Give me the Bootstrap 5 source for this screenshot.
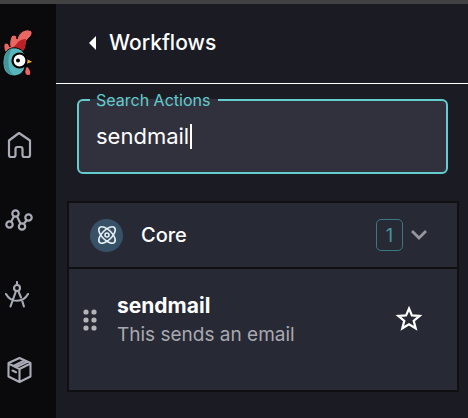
<!DOCTYPE html>
<html lang="en">
<head>
<meta charset="utf-8">
<meta name="viewport" content="width=device-width, initial-scale=1">
<title>Workflows</title>
<link rel="stylesheet" href="https://cdn.jsdelivr.net/npm/bootstrap@5.3.0/dist/css/bootstrap.min.css">
<style>
body { background: #1b1b24; color: #fff; font-family: Inter, "Liberation Sans", sans-serif; border-top: 4px solid #424242; }
.app-shell { min-height: calc(100vh - 4px); }
.side-nav { width: 56px; background: #0a0a0c; }
.side-nav a { width: 38px; height: 75px; color: #a9abb6; }
.side-nav a.brand-link { height: 103px; }
.page-head { height: 80px; border-bottom: 1px solid #fff; padding: 0 28px; }
.page-head a { gap: 11px; font-size: 21px; line-height: 28px; font-weight: 500; margin-top: -2px; }
.search-wrap { padding: 7px 20px 0 21px; }
.search-box { height: 83px; border: 2px solid #63cccd; border-radius: 6px; background: #31313d; padding: 0 17px; }
.search-box legend { float: none; width: auto; margin: 0 0 0 -6px; padding: 0 8px 0 6px; font-size: 16px; line-height: 18px; color: #63cccd; }
.search-box input { width: 100%; height: 40px; margin-top: 7px; padding: 0; font-size: 22px; line-height: 40px; color: #fff; background: transparent; border: 0; outline: 0; caret-color: transparent; }
.text-caret { left: 94px; top: 15px; width: 2px; height: 25px; background: #fff; }
.action-panel { margin: 27px 9px 0 11px; border: 2px solid #101013; background: #272935; }
.group-head { height: 66px; padding: 0 30px 0 21px; border-bottom: 2px solid #101013 !important; color: #fff; }
.group-icon { width: 33px; height: 33px; background: #375266; }
.group-name { margin-left: 18px; font-size: 20px; line-height: 28px; font-weight: 500; }
.group-count { width: 27px; height: 32px; border: 1px solid #3a7984; border-radius: 5px; color: #4a959f; font-size: 18px; }
.action-row { height: 121px; padding: 23px 34px 0 14px; }
.action-title { font-size: 21px; line-height: 28px; font-weight: 700; }
.action-text { font-size: 19px; line-height: 30px; color: #a9aaaf; }
.action-body { margin-left: 19px; }
</style>
<script src="https://cdn.jsdelivr.net/npm/bootstrap@5.3.0/dist/js/bootstrap.bundle.min.js"></script>
</head>
<body>
<div class="app-shell d-flex">
  <nav class="side-nav flex-shrink-0 d-flex flex-column" aria-label="Main">
    <a class="brand-link d-flex align-items-center justify-content-center" href="#" aria-label="Start">
      <svg width="38" height="56" viewBox="0 0 38 56">
        <g stroke="#000" stroke-width="1" stroke-linejoin="round">
          <path d="M5 24C3 18 4 15 6 15c2 0 3 2 4 4-1-7 1-12 4-12 2 0 3 2 3 4C19 4 25 1 29 2c5 1 3 6 0 8-2 2-3 3-3 6 0 4-2 7-5 8Z" fill="#e96762"/>
          <path d="M10 21c3-1 6-4 8-7 2-2 5-3 8-3-1 4 0 9-3 12l-7-1Z" fill="#bd2128" stroke="none"/>
          <path d="M12 20C6 21 2.500 28 3 36c.5 8 5 12 12 12 6-1 10-5 10-11V27c-2-5-7-8-13-7Z" fill="#58b5b9"/>
          <path d="M10 21C5 24 3.500 30 4 36c.5 7 4 11 9 11C7 41 7 29 12 20Z" fill="#43949b" stroke="none"/>
          <path d="M26 39c2-1 3 1 4.500 4 1 3 0 4.500-2.500 4.500-3.500 0-4-4-2-8.500Z" fill="#e96762"/>
          <path d="M26 30l7.500 4-7.500 2.500Z" fill="#efa92f"/>
          <circle cx="19.500" cy="32.500" r="7" fill="#fff" stroke-width="2.200"/>
        </g>
        <circle cx="18" cy="32.500" r="2" fill="#000"/>
      </svg>
    </a>
    <a class="d-flex align-items-center justify-content-center" href="#" aria-label="Home">
      <svg width="28" height="28" viewBox="0 0 28 28" fill="none" stroke="currentColor" stroke-width="2.200" stroke-linejoin="round"><path d="M14 2 4 9.500V24q0 2 2 2h2.500q2 0 2-2v-6q0-2 2-2h3q2 0 2 2v6q0 2 2 2H23q2 0 2-2V9.500Z"/></svg>
    </a>
    <a class="d-flex align-items-center justify-content-center" href="#" aria-label="Workflows">
      <svg width="30" height="28" viewBox="0 0 30 28" fill="none" stroke="currentColor" stroke-width="2.200"><circle cx="5.500" cy="18.500" r="3.200"/><circle cx="11.500" cy="7.500" r="3.200"/><circle cx="18" cy="20.500" r="3.200"/><circle cx="24.500" cy="11.500" r="3.200"/><path d="m7.300 15.500 2.500-5m3.300 0 3.300 7m3.600 0 2.500-3"/></svg>
    </a>
    <a class="d-flex align-items-center justify-content-center" href="#" aria-label="Design">
      <svg width="30" height="28" viewBox="0 0 30 28" fill="none" stroke="currentColor" stroke-width="2.100" stroke-linecap="round"><path d="M13 1v3M12 10 6.500 25.500M14.300 10 17 16.500m1.400 4 1.500 5M2 13c5 9 17 9 22 0"/><circle cx="13" cy="7" r="3"/></svg>
    </a>
    <a class="d-flex align-items-center justify-content-center" href="#" aria-label="Packages">
      <svg width="28" height="28" viewBox="0 0 28 28" fill="none" stroke="currentColor" stroke-width="2.100" stroke-linejoin="round" stroke-linecap="round"><path d="m14.500 2 11 5v13.500l-11 5.500-11-5.500V7ZM3.500 7.500l11 5.500 11-5.500M14.500 13v13M8.500 10 19.500 4.500M11 11.300 22 6M7.500 14.500l3.500 1.700"/></svg>
    </a>
  </nav>
  <main class="flex-grow-1">
    <header class="page-head d-flex align-items-center">
      <a class="d-flex align-items-center text-white text-decoration-none" href="#">
        <svg width="14" height="16" viewBox="0 0 14 16"><path d="M5 8l7-7v14Z" fill="currentColor"/></svg>
        Workflows
      </a>
    </header>
    <form class="search-wrap">
      <fieldset class="search-box">
        <legend><label for="search">Search Actions</label></legend>
        <div class="position-relative">
          <input id="search" type="text" value="sendmail" autocomplete="off">
          <span class="text-caret position-absolute"></span>
        </div>
      </fieldset>
    </form>
    <section class="action-panel">
      <button class="group-head w-100 border-0 bg-transparent d-flex align-items-center" type="button" aria-expanded="true">
        <span class="group-icon rounded-circle d-flex align-items-center justify-content-center">
          <svg width="20" height="20" viewBox="0 0 20 20" fill="none" stroke="#e8f0f4" stroke-width="1.600"><ellipse cx="10" cy="10" rx="10.500" ry="5" transform="rotate(45 10 10)"/><ellipse cx="10" cy="10" rx="10.500" ry="5" transform="rotate(-45 10 10)"/><circle cx="10" cy="10" r="2"/></svg>
        </span>
        <span class="group-name">Core</span>
        <span class="group-count ms-auto me-2 d-flex align-items-center justify-content-center">1</span>
        <svg width="16" height="10" viewBox="0 0 16 10" fill="none" stroke="#96979e" stroke-width="2.800"><path d="m1 1 7 7 7-7"/></svg>
      </button>
      <div class="action-row d-flex align-items-start">
        <svg class="mt-3" width="15" height="24" viewBox="0 0 15 24" fill="#b4b5b7"><circle cx="3" cy="4" r="2.600"/><circle cx="11" cy="4" r="2.600"/><circle cx="3" cy="12" r="2.600"/><circle cx="11" cy="12" r="2.600"/><circle cx="3" cy="20" r="2.600"/><circle cx="11" cy="20" r="2.600"/></svg>
        <div class="action-body">
          <div class="action-title">sendmail</div>
          <div class="action-text">This sends an email</div>
        </div>
        <button class="btn p-0 border-0 ms-auto mt-2 text-white" type="button" aria-label="Add to favourites">
          <svg class="d-block mt-1" width="28" height="28" viewBox="0 0 28 28" fill="none" stroke="currentColor" stroke-width="2.200"><path d="m14 4.500 2.900 6.900 7.700.5-5.900 4.900 2 7.500-6.700-4.100-6.700 4.100 2-7.500-5.900-4.900 7.700-.5Z"/></svg>
        </button>
      </div>
    </section>
  </main>
</div>
</body>
</html>
